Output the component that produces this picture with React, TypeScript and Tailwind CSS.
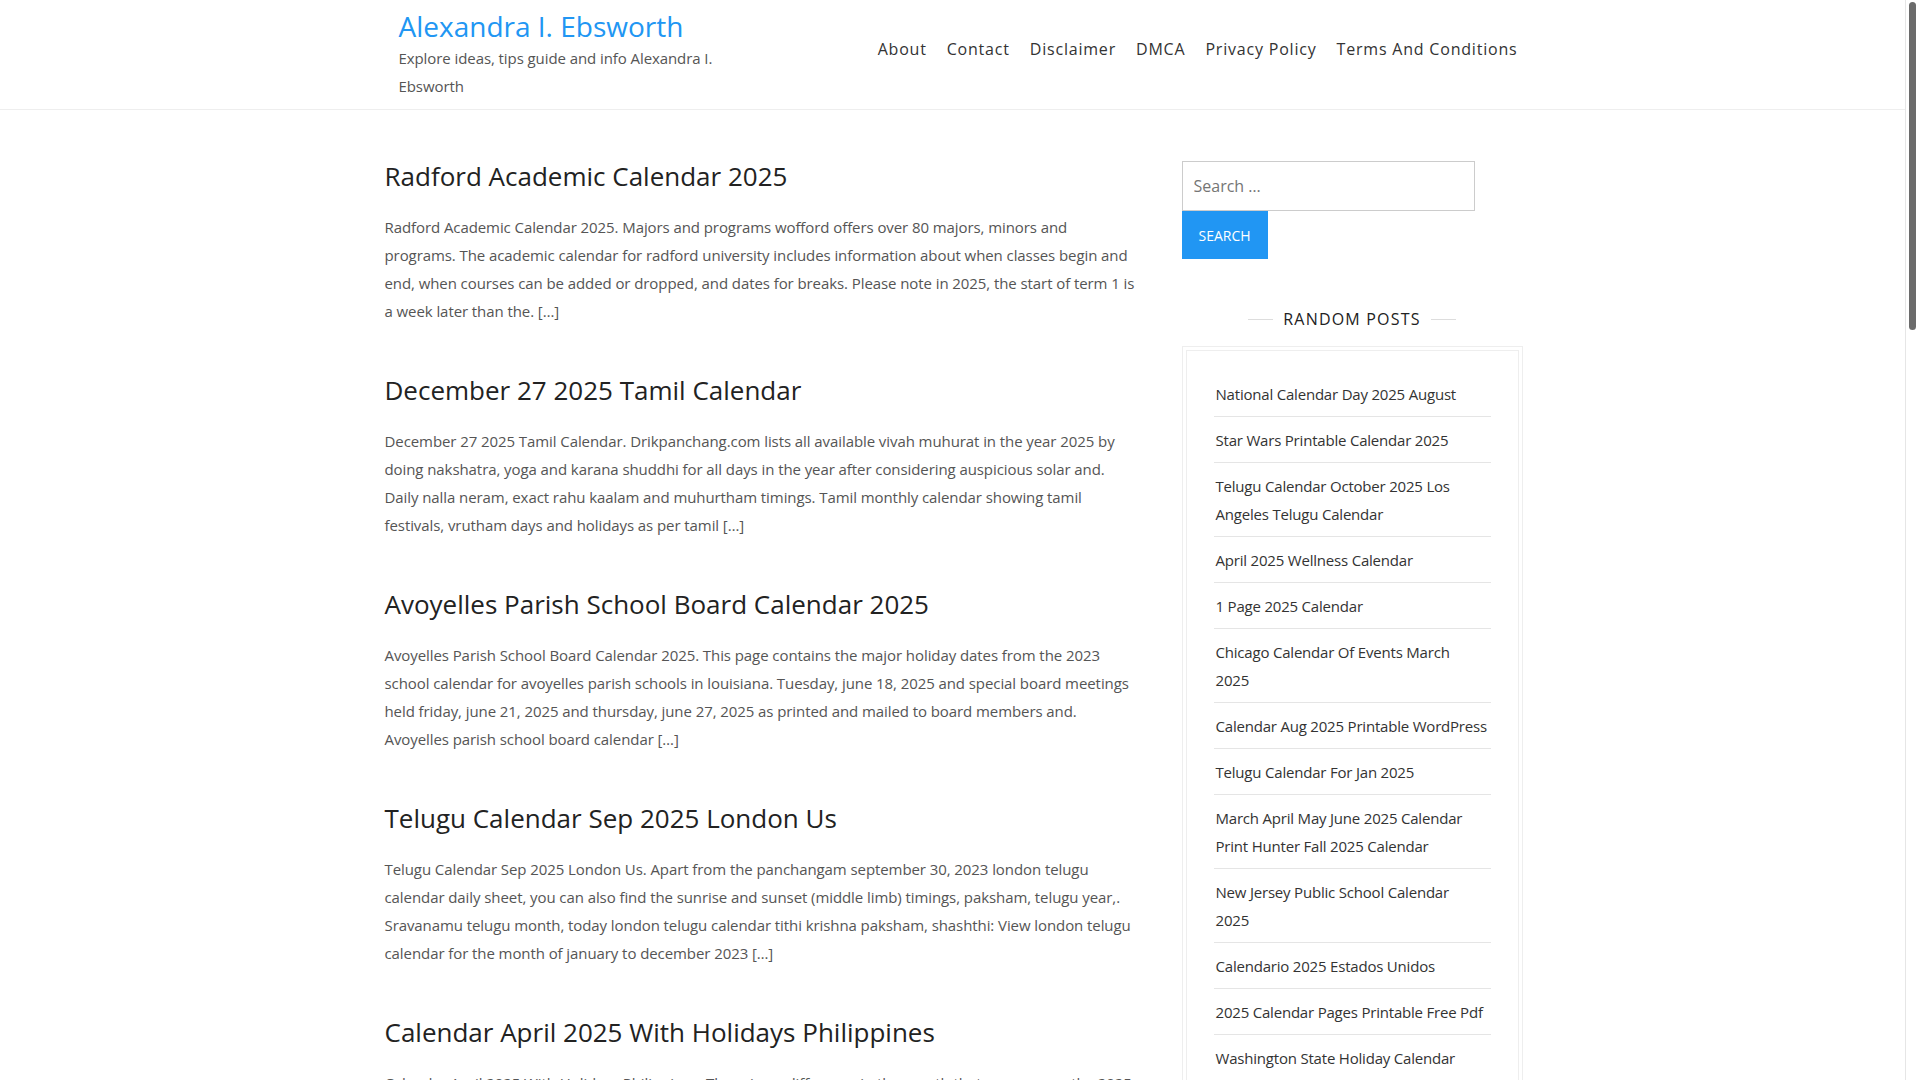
import React from "react";

const FONT = { fontFamily: "'Open Sans', 'Noto Sans', sans-serif" };

const NAV = ["About", "Contact", "Disclaimer", "DMCA", "Privacy Policy", "Terms And Conditions"];

const POSTS = [
  {
    title: "Radford Academic Calendar 2025",
    text: "Radford Academic Calendar 2025. Majors and programs wofford offers over 80 majors, minors and programs. The academic calendar for radford university includes information about when classes begin and end, when courses can be added or dropped, and dates for breaks. Please note in 2025, the start of term 1 is a week later than the. […]",
  },
  {
    title: "December 27 2025 Tamil Calendar",
    text: "December 27 2025 Tamil Calendar. Drikpanchang.com lists all available vivah muhurat in the year 2025 by doing nakshatra, yoga and karana shuddhi for all days in the year after considering auspicious solar and. Daily nalla neram, exact rahu kaalam and muhurtham timings. Tamil monthly calendar showing tamil festivals, vrutham days and holidays as per tamil […]",
  },
  {
    title: "Avoyelles Parish School Board Calendar 2025",
    text: "Avoyelles Parish School Board Calendar 2025. This page contains the major holiday dates from the 2023 school calendar for avoyelles parish schools in louisiana. Tuesday, june 18, 2025 and special board meetings held friday, june 21, 2025 and thursday, june 27, 2025 as printed and mailed to board members and. Avoyelles parish school board calendar […]",
  },
  {
    title: "Telugu Calendar Sep 2025 London Us",
    text: "Telugu Calendar Sep 2025 London Us. Apart from the panchangam september 30, 2023 london telugu calendar daily sheet, you can also find the sunrise and sunset (middle limb) timings, paksham, telugu year,. Sravanamu telugu month, today london telugu calendar tithi krishna paksham, shashthi: View london telugu calendar for the month of january to december 2023 […]",
  },
  {
    title: "Calendar April 2025 With Holidays Philippines",
    text: "Calendar April 2025 With Holidays Philippines. There is no difference in the month that you can use the 2025 holidays calendar to plan your vacations, family trips and long weekends. The official list of regular holidays and special non-working days is released by the government every year. Print the calendar for april 2025 with holidays and keep it on your desk […]",
  },
  {
    title: "Lunar Calendar 2025 Printable",
    text: "Lunar Calendar 2025 Printable. Keep track of every new moon, first quarter, full moon and last quarter of the year with this free printable lunar calendar. The moon phases are shown for each day of the month, so you can plan gardening, fishing and outdoor activities around the lunar cycle. Download the pdf and print it at home […]",
  },
  {
    title: "Uga Academic Calendar Spring 2025",
    text: "Uga Academic Calendar Spring 2025. The university of georgia academic calendar lists the first and last day of classes, drop and add dates, midterm, spring break and final exam periods. Students should check the official calendar regularly, as dates may change during the semester. Registration for the spring term opens in november […]",
  },
  {
    title: "Free Printable Monthly Calendar 2025 Word",
    text: "Free Printable Monthly Calendar 2025 Word. These editable monthly calendar templates are available in word format, so you can add your own notes, birthdays and appointments before printing. Each month fits on a single landscape page with large boxes for writing. Choose from several designs with holidays included or left blank […]",
  },
  {
    title: "Hebrew Calendar September 2025",
    text: "Hebrew Calendar September 2025. The jewish calendar for september 2025 includes the dates of elul and tishrei, as well as the high holidays of rosh hashanah. Candle lighting times, torah portions and fast days are listed for each week of the month. Dates on the hebrew calendar begin at sundown the evening before […]",
  },
  {
    title: "Ohio State Football Calendar 2025",
    text: "Ohio State Football Calendar 2025. The buckeyes schedule for the 2025 season features home games at ohio stadium and road trips across the big ten conference. Kickoff times and tv networks are announced closer to each game date. Add the full schedule to your phone calendar so you never miss a game this fall […]",
  },
  {
    title: "Blank Calendar 2025 Template Printable",
    text: "Blank Calendar 2025 Template Printable. A blank calendar template gives you the freedom to organize your year the way you like, from school schedules to work shifts and meal planning. Print as many copies as you need and fill in the dates for any month. The templates are available in pdf, word and excel formats […]",
  },
  {
    title: "Nepali Calendar 2025 Baisakh",
    text: "Nepali Calendar 2025 Baisakh. Baisakh is the first month of the bikram sambat calendar and marks the beginning of the nepali new year. The calendar shows tithi, festivals, public holidays and auspicious dates for marriage and other ceremonies. Compare the nepali dates with the english calendar for the same month […]",
  },
];

// "\n" keeps the wrap points of the original theme font
const RANDOM = [
  "National Calendar Day 2025 August",
  "Star Wars Printable Calendar 2025",
  "Telugu Calendar October 2025 Los Angeles Telugu Calendar",
  "April 2025 Wellness Calendar",
  "1 Page 2025 Calendar",
  "Chicago Calendar Of Events March\n2025",
  "Calendar Aug 2025 Printable WordPress",
  "Telugu Calendar For Jan 2025",
  "March April May June 2025 Calendar Print Hunter Fall 2025 Calendar",
  "New Jersey Public School Calendar\n2025",
  "Calendario 2025 Estados Unidos",
  "2025 Calendar Pages Printable Free Pdf",
  "Washington State Holiday Calendar 2025",
  "Printable Calendar 2025 With Week Numbers",
  "Gsu Academic Calendar Fall 2025",
];

function Header() {
  return (
    <header className="border-b border-[#eeeeee] h-[110px]">
      <div className="w-[1140px] mx-auto flex justify-between items-start">
        <div className="pl-4 pt-2 w-[341px]">
          <a href="#" className="block text-[28px] leading-[36px] font-medium text-[#2196f3]">
            Alexandra I. Ebsworth
          </a>
          <p className="text-[15px] leading-[28px] tracking-[-0.08px] text-[#555555]">
            Explore ideas, tips guide and info Alexandra I. Ebsworth
          </p>
        </div>
        <nav className="mt-[35px] pr-[5px] flex gap-[20px]">
          {NAV.map((n) => (
            <a key={n} href="#" className="text-[16px] leading-[28px] font-medium tracking-[0.8px] text-[#333333]">
              {n}
            </a>
          ))}
        </nav>
      </div>
    </header>
  );
}

function Post({ title, text }: { title: string; text: string }) {
  return (
    <article className="mb-[48px]">
      <h2 className="text-[26px] leading-[35px] font-medium text-[#222222] mb-[19px]">
        <a href="#">{title}</a>
      </h2>
      <p className="text-[15px] leading-[28px] tracking-[-0.08px] text-[#555555]">{text}</p>
    </article>
  );
}

function Sidebar() {
  return (
    <aside className="w-[341px]">
      <form className="flex flex-col items-start pt-[2px]" onSubmit={(e) => e.preventDefault()}>
        <input
          type="search"
          placeholder="Search …"
          className="w-[293px] h-[50px] border border-[#cccccc] px-[11px] text-[16px] text-[#555555] placeholder:text-[#757575] outline-none"
        />
        <button
          type="submit"
          className="w-[86px] h-[48px] bg-[#2196f3] text-white text-[14px] font-medium uppercase"
        >
          Search
        </button>
      </form>

      <div className="mt-[46px] mb-[13px] flex items-center justify-center gap-[10px]">
        <span className="w-[25px] h-px bg-[#dddddd]" />
        <h3 className="text-[16px] leading-[28px] font-medium tracking-[1.2px] text-[#222222] uppercase">
          Random Posts
        </h3>
        <span className="w-[25px] h-px bg-[#dddddd]" />
      </div>

      <div className="border border-[#eeeeee] p-[3px]">
        <ul className="border border-[#eeeeee] px-[27px] pt-[20px] pb-[20px]">
          {RANDOM.map((r) => (
            <li key={r} className="border-b border-[#e5e5e5] pt-[9px] pb-[8px] last:border-b-0">
              <a
                href="#"
                className="block pl-[2px] whitespace-pre-line text-[15px] leading-[28px] tracking-[-0.2px] text-[#333333]"
              >
                {r}
              </a>
            </li>
          ))}
        </ul>
      </div>
    </aside>
  );
}

function Scrollbar() {
  return (
    <div className="fixed top-0 right-0 h-screen w-[15px] bg-white border-l border-[#e6e6e6]">
      <div className="absolute top-[2px] left-[3px] w-[7px] h-[328px] rounded-full bg-[#6b6b6b]" />
    </div>
  );
}

export default function App() {
  return (
    <div className="bg-white pr-[15px]" style={FONT}>
      <Header />
      <div className="w-[1140px] mx-auto flex justify-between pt-[49px] pb-[60px]">
        <main className="w-[755px] pl-[2px]">
          {POSTS.map((p) => (
            <Post key={p.title} title={p.title} text={p.text} />
          ))}
        </main>
        <Sidebar />
      </div>
      <footer className="border-t border-[#eeeeee] py-[30px] text-center text-[14px] text-[#777777]">
        Copyright © 2025 Alexandra I. Ebsworth. All rights reserved.
      </footer>
      <Scrollbar />
    </div>
  );
}
